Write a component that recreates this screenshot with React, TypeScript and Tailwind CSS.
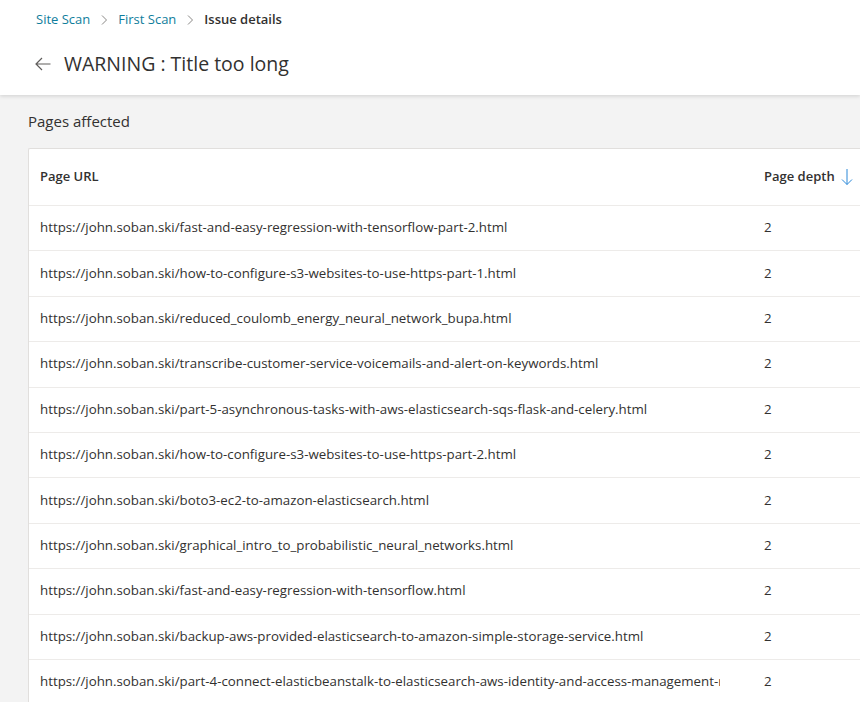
import React from "react";

const rows = [
  "https://john.soban.ski/fast-and-easy-regression-with-tensorflow-part-2.html",
  "https://john.soban.ski/how-to-configure-s3-websites-to-use-https-part-1.html",
  "https://john.soban.ski/reduced_coulomb_energy_neural_network_bupa.html",
  "https://john.soban.ski/transcribe-customer-service-voicemails-and-alert-on-keywords.html",
  "https://john.soban.ski/part-5-asynchronous-tasks-with-aws-elasticsearch-sqs-flask-and-celery.html",
  "https://john.soban.ski/how-to-configure-s3-websites-to-use-https-part-2.html",
  "https://john.soban.ski/boto3-ec2-to-amazon-elasticsearch.html",
  "https://john.soban.ski/graphical_intro_to_probabilistic_neural_networks.html",
  "https://john.soban.ski/fast-and-easy-regression-with-tensorflow.html",
  "https://john.soban.ski/backup-aws-provided-elasticsearch-to-amazon-simple-storage-service.html",
  "https://john.soban.ski/part-4-connect-elasticbeanstalk-to-elasticsearch-aws-identity-and-access-management-roles.html",
];

function Chevron() {
  return (
    <svg width="12" height="12" viewBox="0 0 12 12" className="mx-[8px] text-[#8a8886]" aria-hidden="true">
      <path d="M4 1.5l4.5 4.5L4 10.5" fill="none" stroke="currentColor" strokeWidth="1" />
    </svg>
  );
}

export default function App() {
  return (
    <div
      className="h-[702px] w-[860px] overflow-hidden bg-[#f3f3f3] text-[#323130]"
      style={{ fontFamily: '"Open Sans", "Noto Sans", sans-serif' }}
    >
      {/* Header */}
      <header className="relative z-10 h-[95px] bg-white shadow-[0_1.6px_3.6px_rgba(0,0,0,0.13),0_0.3px_0.9px_rgba(0,0,0,0.11)]">
        <nav className="flex h-[40px] items-center pl-[36px] text-[13px]">
          <span className="text-[#0f7d9c]">Site Scan</span>
          <Chevron />
          <span className="text-[#0f7d9c]">First Scan</span>
          <Chevron />
          <span className="font-semibold text-[#323130]">Issue details</span>
        </nav>
        <div className="flex h-[48px] items-center pl-[34px]">
          <svg width="18" height="18" viewBox="0 0 18 18" className="text-[#605e5c]" aria-hidden="true">
            <path d="M16.5 9H2M8 3L2 9l6 6" fill="none" stroke="currentColor" strokeWidth="1.2" />
          </svg>
          <h1 className="ml-[12px] text-[19.5px] text-[#323130]">WARNING : Title too long</h1>
        </div>
      </header>

      {/* Content */}
      <main className="pl-[28px] pt-[15px]">
        <h2 className="h-[38px] text-[15px] leading-[22px]">Pages affected</h2>
        <div className="overflow-hidden rounded-tl-[2px] border border-r-0 border-[#e1dfdd] bg-white">
          <div className="flex h-[57px] items-center border-b border-[#edebe9] text-[13px] font-semibold">
            <div className="w-[724px] pl-[11px]">Page URL</div>
            <div className="flex items-center pl-[11px]">
              Page depth
              <svg width="12" height="18" viewBox="0 0 12 18" className="ml-[6px] text-[#2b88d8]" aria-hidden="true">
                <path d="M6 1v15.5M1 11.5l5 5 5-5" fill="none" stroke="currentColor" strokeWidth="1" />
              </svg>
            </div>
          </div>
          {rows.map((url, i) => (
            <div key={i} className="flex h-[45.4px] items-center border-b border-[#edebe9] text-[13.3px]">
              <div className="w-[724px] pl-[11px] pr-[33px]">
                <div className="overflow-hidden whitespace-nowrap">{url}</div>
              </div>
              <div className="pl-[11px]">2</div>
            </div>
          ))}
        </div>
      </main>
    </div>
  );
}
